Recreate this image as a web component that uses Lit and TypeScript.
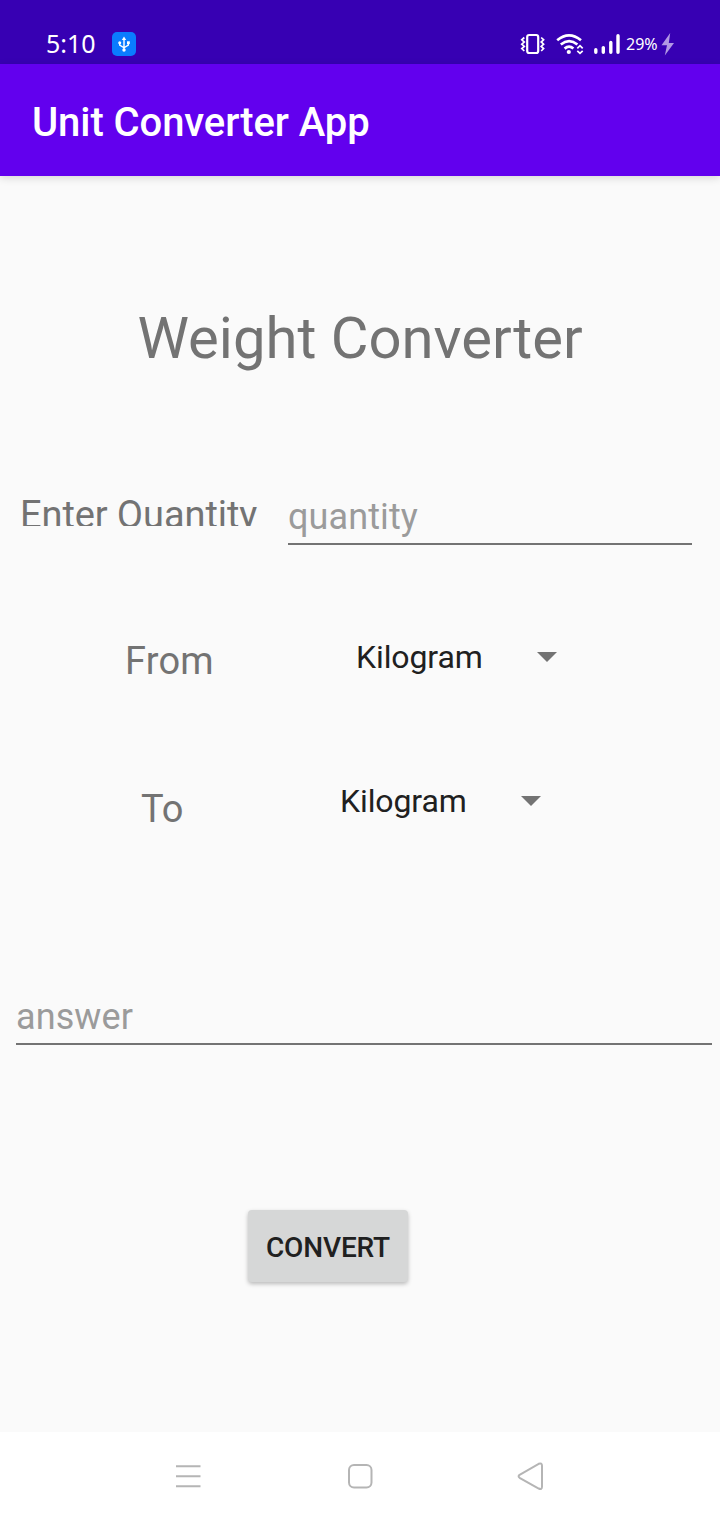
import { LitElement, html, css } from "lit";
import { customElement } from "lit/decorators.js";

@customElement("app-root")
export class AppRoot extends LitElement {
  static styles = css`
    :host { display: flex; flex-direction: column; width: 720px; height: 1520px; background: #fafafa; font-family: Roboto, sans-serif; color: #737373; overflow: hidden; white-space: nowrap; }
    * { box-sizing: border-box; }
    svg { display: block; flex: none; }
    .status { height: 64px; flex: none; background: #3700b3; color: #fff; display: flex; align-items: flex-start; padding: 31px 44px 0 46px; }
    .clock { font-family: "Noto Sans", sans-serif; font-size: 25px; line-height: 26px; width: 66px; margin-top: -1px; }
    .usb { margin-top: 1px; }
    .spacer { flex: 1; }
    .battery { font-family: "Noto Sans", sans-serif; font-size: 16px; line-height: 26px; width: 34px; }
    .bar { height: 112px; flex: none; background: #6200ee; color: #fff; padding: 35px 32px 0; font-size: 40px; line-height: 48px; font-weight: 500; letter-spacing: -0.08px; box-shadow: 0 2px 8px rgba(0, 0, 0, .14); }
    .main { flex: 1; display: flex; flex-direction: column; }
    .heading { margin-top: 126px; height: 72px; line-height: 72px; font-size: 58px; text-align: center; }
    .row { display: flex; align-items: flex-start; }
    .quantity { margin-top: 114px; padding: 0 28px 0 20px; height: 57px; }
    .label { font-size: 38px; line-height: 46px; }
    .clipped { width: 268px; height: 38px; line-height: 54px; overflow: hidden; letter-spacing: -0.08px; }
    .field { font-size: 36px; line-height: 43px; color: #9b9b9b; height: 49px; border-bottom: 2px solid #737373; letter-spacing: 0.1px; }
    .quantity .field { flex: 1; margin-top: 8px; }
    .from { margin-top: 93px; padding-left: 125px; height: 44px; }
    .from .label { width: 231px; letter-spacing: 0.2px; }
    .to { margin-top: 100px; padding-left: 141px; height: 48px; }
    .to .label { width: 199px; padding-top: 4px; }
    .select { display: flex; font-size: 32px; line-height: 38px; color: #202020; letter-spacing: -0.1px; }
    .select span { width: 181px; }
    .select svg { margin-top: 14px; }
    .answer { margin: 166px 8px 0 16px; }
    .convert { margin: 165px 0 0 248px; width: 160px; height: 72px; padding: 3px 0 0; border: 0; border-radius: 4px; background: #d6d7d7; color: #202020; font: 500 28px/32px Roboto, sans-serif; letter-spacing: -0.15px; box-shadow: 0 2px 4px rgba(0, 0, 0, .26); }
    .nav { height: 88px; flex: none; background: #fff; }
  `;

  private spinner(value: string) {
    return html`<div class="select"><span>${value}</span>
      <svg width="20" height="10" viewBox="0 0 20 10"><path d="M0 0H20L10 10Z" fill="#737373" /></svg></div>`;
  }

  render() {
    return html`
      <div class="status">
        <div class="clock">5:10</div>
        <svg class="usb" width="24" height="24" viewBox="0 0 24 24">
          <rect width="24" height="24" rx="5" fill="#0a7cff" />
          <path d="M12 7V18M7.7 11V13.2L12 15.8L16.3 13.2V11" fill="none" stroke="#fff" stroke-width="1.4" />
          <path d="M12 4.6L14.2 8H9.8Z" fill="#fff" />
          <circle cx="7.7" cy="10.8" r="1.5" fill="#fff" /><rect x="15" y="9.3" width="2.8" height="2.8" fill="#fff" />
          <circle cx="12" cy="18" r="1.7" fill="#fff" />
        </svg>
        <div class="spacer"></div>
        <svg width="106" height="26" viewBox="520 31 106 26" fill="none" stroke="#fff">
          <rect x="527.2" y="35" width="11" height="18" rx="2" stroke-width="2.2" />
          <path d="M524.3 37.5L521.8 39.8L524.3 42L521.8 44.2L524.3 46.4L521.8 48.6L524.3 51M541.2 37.5L543.6 39.8L541.2 42L543.6 44.2L541.2 46.4L543.6 48.6L541.2 51" stroke-width="1.7" />
          <path d="M557.2 40.2Q569 30.4 581 40.2M560.8 44.5Q569.1 37.8 577.4 44.5M564.6 48.6Q569.1 44.8 573.4 48.6" stroke-width="2.7" />
          <circle cx="568.8" cy="52" r="2.1" fill="#fff" stroke="none" />
          <path d="M577.3 48.3L580 45.6L582.7 48.3M577.3 50.8L580 53.4L582.7 50.8" stroke-width="1.7" />
          <path d="M595.8 49.8V52.2M603.3 47.6V52.2M610.8 42.4V52.2M618 35.8V52.2" stroke-width="3.4" stroke-linecap="round" />
        </svg>
        <div class="battery">29%</div>
        <svg width="16" height="26" viewBox="660 31 16 26">
          <path d="M670.2 33L661.5 45.2H667L664.8 55.5L674 43H668.8Z" fill="#b298e4" />
        </svg>
      </div>
      <div class="bar">Unit Converter App</div>
      <div class="main">
        <div class="heading">Weight Converter</div>
        <div class="row quantity">
          <div class="label clipped">Enter Quantity</div>
          <div class="field">quantity</div>
        </div>
        <div class="row from"><div class="label">From</div>${this.spinner("Kilogram")}</div>
        <div class="row to"><div class="label">To</div>${this.spinner("Kilogram")}</div>
        <div class="field answer">answer</div>
        <button class="convert">CONVERT</button>
      </div>
      <div class="nav">
        <svg width="720" height="88" viewBox="0 1432 720 88" fill="none" stroke="#b5b5b5" stroke-width="2">
          <path d="M176 1466.3H200.5M176 1476.3H200.5M176 1486.3H200.5" />
          <rect x="349" y="1465" width="22.5" height="22.5" rx="5" />
          <path d="M519.6 1474.8L538.7 1463.8Q542 1462.5 542 1465.8V1486.8Q542 1490 538.7 1488.5L519.6 1477.8Q517.6 1476.3 519.6 1474.8Z" />
        </svg>
      </div>
    `;
  }
}
